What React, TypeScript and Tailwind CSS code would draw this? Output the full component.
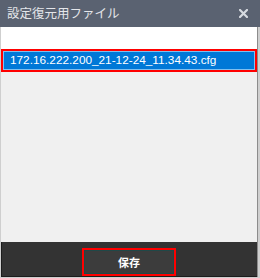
import React from "react";

export default function App() {
  return (
    <div
      className="w-[260px] h-[278px] flex flex-col bg-[#cfcfcf] overflow-hidden"
      style={{ fontFamily: '"Noto Sans CJK JP", "Liberation Sans", sans-serif' }}
    >
      {/* Title bar */}
      <div className="h-[27px] bg-[#5a6271] flex items-center justify-between pl-[7px] pr-[12px] shrink-0">
        <span className="text-[12.5px] text-[#e4e6ea] leading-none">設定復元用ファイル</span>
        <svg width="9" height="9" viewBox="0 0 9 9">
          <path d="M1 1 L8 8 M8 1 L1 8" stroke="#d6dae0" strokeWidth="2.2" strokeLinecap="square" />
        </svg>
      </div>
      <div className="flex-1 flex flex-col pl-[1px] pr-[2px] pb-[1px]">
        <div className="flex-1 flex flex-col border-r border-[#8c8c8c]">
          <div className="h-[22px] bg-white shrink-0" />
          <div className="h-[23px] border-2 border-[#ff0000] shrink-0 flex">
            <div className="flex-1 bg-[#0078d7] border border-[#7fc0f0] flex items-center pl-[6px]">
              <span
                className="text-[11.8px] text-white leading-none"
                style={{ fontFamily: '"Liberation Sans", sans-serif' }}
              >
                172.16.222.200_21-12-24_11.34.43.cfg
              </span>
            </div>
          </div>
          <div className="flex-1 bg-[#f0f0f0]" />
          <div className="h-[35px] bg-[#333333] border-l border-b border-[#1c1c1c] shrink-0 flex justify-center items-end pt-[7px] pr-[1px]">
            <div className="w-[94px] h-[28px] border-2 border-[#ff0000] flex">
              <div className="flex-1 bg-[#3c3c3c] border border-[#1f4848] flex items-center justify-center">
                <span className="text-[11px] font-bold text-white leading-none">保存</span>
              </div>
            </div>
          </div>
        </div>
      </div>
    </div>
  );
}
